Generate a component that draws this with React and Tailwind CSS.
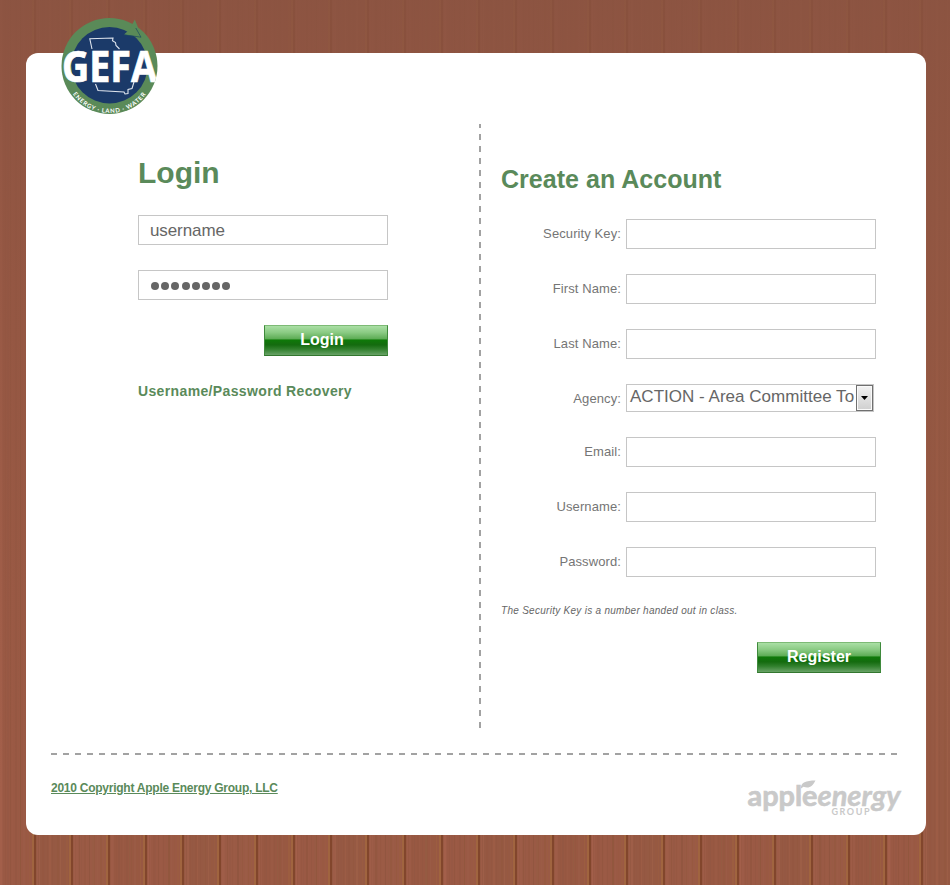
import React from "react";

const PLANK = 36.98;
const PLANKS = Array.from({ length: 27 }, (_, i) => i);
const TONES = ["#9a5944", "#965943", "#9a5a45", "#985842"];
const GRAIN = [
  [2, "#a45f4b"], [4, "#9f5e49"], [7, "#93563f"], [9, "#935843"], [12, "#935540"],
  [14, "#9c5c46"], [17, "#91553f"], [20, "#955c43"], [22, "#91573e"], [25, "#9c5e47"],
  [28, "#97593f"], [31, "#9c5e40"],
];

function Wood() {
  return (
    <svg className="absolute inset-0 -z-10" width="950" height="885" aria-hidden="true">
      <defs>
        <linearGradient id="shade" x1="0" y1="0" x2="0" y2="1">
          <stop offset="0" stopColor="#8a5341" stopOpacity="0.85" />
          <stop offset="0.07" stopColor="#8b5341" stopOpacity="0.78" />
          <stop offset="0.5" stopColor="#925642" stopOpacity="0.4" />
          <stop offset="0.9" stopColor="#995a44" stopOpacity="0" />
        </linearGradient>
      </defs>
      {PLANKS.map((i) => {
        const x = Math.round(i * PLANK - 2);
        return (
          <g key={i}>
            <rect x={x} y="0" width="38" height="885" fill={TONES[i % 4]} />
            {GRAIN.map(([dx, c], k) => (
              <rect key={k} x={x + dx} y="0" width={(k + i) % 3 === 0 ? 2 : 1} height="885" fill={c} opacity={(k * 3 + i) % 4 === 0 ? 0.9 : 0.5} />
            ))}
            <rect x={x - 3} y="0" width="2" height="885" fill="#a0643f" />
            <rect x={x - 1} y="0" width="2" height="885" fill="#82462c" />
          </g>
        );
      })}
      <rect width="950" height="885" fill="url(#shade)" />
    </svg>
  );
}

function GefaLogo() {
  return (
    <svg className="absolute left-[34px] top-[-37px]" width="100" height="100" viewBox="60 16 100 100">
      <defs>
        <path id="motto" d="M66.5 68 A43 43 0 0 0 152.5 68" />
        <clipPath id="seal"><circle cx="109.5" cy="66" r="48" /></clipPath>
      </defs>
      <circle cx="109.5" cy="66" r="48" fill="#5a8a58" />
      <circle cx="109.5" cy="65.3" r="38.2" fill="#1b3a69" />
      <path d="M134.8 19.5 L142 37.3 L124 34.5 L129.5 29.5 Z" fill="#5a8a58" />
      <path d="M124 34.8 L141 37.2 L135.8 28" fill="none" stroke="#1b4a60" strokeWidth="0.7" />
      <path d="M92 49 L89.8 38.8 L113 38 L112.5 40.8 L115.5 42.5 L116 45.5 L119.5 49" fill="none" stroke="#dfe5ee" strokeWidth="1.1" />
      <path d="M95.5 84 L98 90.5 L124 92 L125 94 L128 93.5 L128 89.5 L132 88.5 L134 82" fill="none" stroke="#dfe5ee" strokeWidth="1.1" />
      <text x="62" y="82" textLength="95" lengthAdjust="spacingAndGlyphs" fill="#fff" stroke="#fff" strokeWidth="0.7" fontFamily="'Open Sans', sans-serif" fontWeight="700" fontSize="43" clipPath="url(#seal)">GEFA</text>
      <text fill="#fff" fontFamily="Lato, sans-serif" fontWeight="700" fontSize="6" letterSpacing="0.6" dy="2">
        <textPath href="#motto" startOffset="50%" textAnchor="middle">ENERGY · LAND · WATER</textPath>
      </text>
    </svg>
  );
}

function AppleEnergyLogo() {
  return (
    <svg width="156" height="42" viewBox="746 776 156 42" fill="#c9c9c9" fontFamily="Lato, sans-serif">
      <text x="747.5" y="806" textLength="70" lengthAdjust="spacingAndGlyphs" fontWeight="700" fontSize="29" stroke="#c9c9c9" strokeWidth="0.7">apple</text>
      <text x="817.5" y="806" textLength="83" lengthAdjust="spacingAndGlyphs" fontWeight="700" fontStyle="italic" fontSize="29" stroke="#c9c9c9" strokeWidth="0.5">energy</text>
      <path d="M801 788.5 C800.5 782.5 806 780.5 815.5 780.5 C812.5 786.5 809 789 803.5 786.8 Z" />
      <text x="831.5" y="815" textLength="38" fontWeight="700" fontSize="9">GROUP</text>
    </svg>
  );
}

const button =
  "h-[31px] w-[124px] border border-t-[#7dba75] border-x-[#3f8a3c] border-b-[#33772f] bg-[linear-gradient(to_bottom,#aadfa5_0%,#8bcb84_22%,#5aaa52_46%,#0e7a08_47%,#146b0f_65%,#31802d_80%,#69a367_100%)] text-center text-[16px] font-bold leading-[26px] text-white pb-[2px]";
const field = "h-[30px] w-[250px] border border-[#c6c6c6] bg-white pl-[11px] text-[17px] text-[#666] outline-none";

function Row({ label, low, children }) {
  return (
    <label className="flex w-[375px] items-center justify-end gap-[5px]">
      <span className={"text-[13px] leading-[18px] tracking-[0.1px] text-[#757575]" + (low ? " pt-[2px]" : "")}>{label}</span>
      {children}
    </label>
  );
}

export default function App() {
  return (
    <div className="relative isolate h-[885px] w-[950px] overflow-hidden pl-[26px] pt-[53px] font-['Liberation_Sans',Arial,sans-serif]">
      <Wood />
      <main className="relative h-[782px] w-[900px] rounded-[12px] bg-white">
        <GefaLogo />
        <div className="flex h-[700px]">
          <section className="w-[453px] pl-[112px] pt-[101px]">
            <h1 className="h-[61px] text-[30px] font-bold leading-[38px] text-[#5a8a5a]">Login</h1>
            <form className="flex w-[250px] flex-col gap-[25px]">
              <input className={field + " pt-[2px] tracking-[-0.1px]"} defaultValue="username" />
              <div className={field + " flex items-center gap-[2px] pt-[2px]"}>
                {Array.from({ length: 8 }, (_, i) => (
                  <span key={i} className="flex w-[8.2px] justify-center first:ml-[1px]">
                    <span className="size-[8px] shrink-0 rounded-full bg-[#666]" />
                  </span>
                ))}
              </div>
              <button type="button" className={button + " self-end pr-[8px]"}>Login</button>
            </form>
            <a className="mt-[25px] block text-[14px] font-bold leading-[20px] tracking-[0.36px] text-[#5a8a5a]">Username/Password Recovery</a>
          </section>
          <div className="mt-[71px] h-[604px] w-[2px] bg-[repeating-linear-gradient(to_bottom,#a2a2a2_0px,#a2a2a2_6px,transparent_6px,transparent_12px)] bg-[position:0_-2px] bg-[size:2px_612px]" />
          <section className="w-[421px] pl-[20px] pt-[109px]">
            <h2 className="h-[57px] text-[25px] font-bold leading-[34px] tracking-[0.03px] text-[#5a8a5a]">Create an Account</h2>
            <form>
              <div className="flex flex-col gap-[25px]">
                <Row label="Security Key:"><input className={field} /></Row>
                <Row label="First Name:"><input className={field} /></Row>
                <Row label="Last Name:"><input className={field} /></Row>
                <Row label="Agency:" low>
                  <div className="mr-[2px] flex h-[28px] w-[248px] border border-[#c6c6c6] bg-white">
                    <span className="w-[229px] shrink-0 overflow-hidden whitespace-nowrap pl-[3px] text-[17px] leading-[23px] tracking-[0.02px] text-[#666]">ACTION - Area Committee To</span>
                    <span className="flex w-[17px] items-center justify-center border border-[#707070] bg-gradient-to-b from-[#f3f3f3] to-[#cfcfcf] shadow-[inset_0_0_0_1px_#fafafa]">
                      <svg width="7" height="4" viewBox="0 0 7 4"><path d="M0 0H7L3.5 4Z" fill="#000" /></svg>
                    </span>
                  </div>
                </Row>
                <Row label="Email:"><input className={field} /></Row>
                <Row label="Username:"><input className={field} /></Row>
                <Row label="Password:"><input className={field} /></Row>
              </div>
              <p className="mt-[25px] text-[10px] italic leading-[17px] tracking-[0.28px] text-[#666]">The Security Key is a number handed out in class.</p>
              <button type="button" className={button + " ml-[256px] mt-[23px] block"}>Register</button>
            </form>
          </section>
        </div>
        <div className="ml-[25px] h-[2px] w-[846px] bg-[repeating-linear-gradient(to_right,#a2a2a2_0px,#a2a2a2_6px,transparent_6px,transparent_12px)]" />
        <footer className="flex items-start justify-between pl-[25px] pr-[24px] pt-[21px]">
          <a className="mt-[3px] text-[12px] font-bold leading-[18px] tracking-[-0.25px] text-[#5a8a5a] underline">2010 Copyright Apple Energy Group, LLC</a>
          <AppleEnergyLogo />
        </footer>
      </main>
    </div>
  );
}
